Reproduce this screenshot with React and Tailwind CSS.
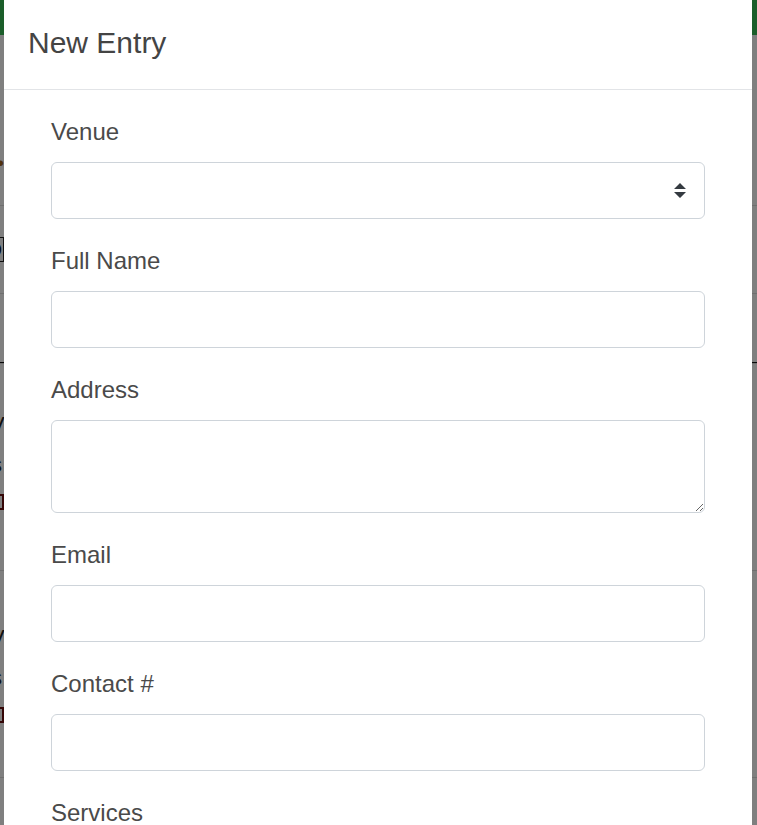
import { useState } from 'react';

const fields = [
  { label: 'Full Name', type: 'text' },
  { label: 'Address', type: 'textarea' },
  { label: 'Email', type: 'email' },
  { label: 'Contact #', type: 'text' },
];

function ListRow({ top }) {
  // a list entry of the page behind, only its left edge shows
  return (
    <div className="h-[207px] border-t border-[#dedede] flex flex-col items-start gap-[18px] text-[22px] leading-[22px] text-[#222]" style={{ paddingTop: top }}>
      <span className="-ml-[10px]">V</span>
      <span className="-ml-[9px]">s</span>
      <span className="-ml-[12px] w-[16px] h-[16px] border-2 border-[#6b0d0d]" />
    </div>
  );
}

function Backdrop() {
  return (
    <div className="w-[757px] h-[825px] bg-white overflow-hidden flex flex-col font-['Liberation_Sans',Arial,sans-serif]">
      <div className="h-[35px] bg-[#36bc54]" />
      <div className="h-[170px] flex items-start pt-[118px]">
        <span className="-ml-[3px] text-[#a0631a] text-[20px] leading-none">•</span>
      </div>
      <div className="h-[88px] border-t border-[#dedede] flex items-start pt-[31px]">
        <div className="-ml-[40px] w-[44px] h-[25px] border border-[#222] text-[22px] leading-[23px] text-[#111] text-right pr-[1px]">Q</div>
      </div>
      <div className="h-[69px] border-t border-[#dedede]" />
      <div className="h-[1px] bg-[#111]" />
      <ListRow top={50} />
      <ListRow top={56} />
      <div className="h-[48px] border-t border-[#dedede]" />
    </div>
  );
}

export default function App() {
  const [venue, setVenue] = useState('');

  return (
    <div className="relative w-[757px] h-[825px] overflow-hidden">
      <Backdrop />
      <div className="fixed inset-0 bg-black/50 pl-[4px] overflow-hidden">
        <div className="w-[748px] bg-white font-['Liberation_Sans',Arial,sans-serif] text-[#4a4a4a]">
          <div className="pt-[20px] pb-[24px] px-[24px] border-b border-[#e2e4e7]">
            <h5 className="text-[30px] leading-[45px] font-normal text-[#444]">New Entry</h5>
          </div>
          <div className="pt-[24px] px-[47px] flex flex-col gap-[24px]">
            <div className="flex flex-col gap-[12px]">
              <label className="text-[24px] leading-[36px]">Venue</label>
              <div className="relative">
                <select
                  value={venue}
                  onChange={(e) => setVenue(e.target.value)}
                  className="appearance-none w-full h-[57px] bg-white border border-[#ced4da] rounded-[6px] px-[18px] text-[24px] text-[#495057] outline-none"
                >
                  <option value=""></option>
                </select>
                <svg
                  className="absolute right-[19px] top-[21px] pointer-events-none"
                  width="12"
                  height="15"
                  viewBox="0 0 4 5"
                >
                  <path d="M2 0L0 2h4zm0 5L0 3h4z" fill="#343a40" />
                </svg>
              </div>
            </div>
            {fields.map((f) => (
              <div key={f.label} className="flex flex-col gap-[12px]">
                <label className="text-[24px] leading-[36px]">{f.label}</label>
                {f.type === 'textarea' ? (
                  <textarea
                    rows={2}
                    className="block w-full h-[93px] border border-[#ced4da] rounded-[6px] px-[18px] py-[9px] text-[24px] resize-y outline-none"
                  />
                ) : (
                  <input
                    type={f.type}
                    className="block w-full h-[57px] border border-[#ced4da] rounded-[6px] px-[18px] text-[24px] outline-none"
                  />
                )}
              </div>
            ))}
            <label className="text-[24px] leading-[36px]">Services</label>
          </div>
        </div>
      </div>
    </div>
  );
}
